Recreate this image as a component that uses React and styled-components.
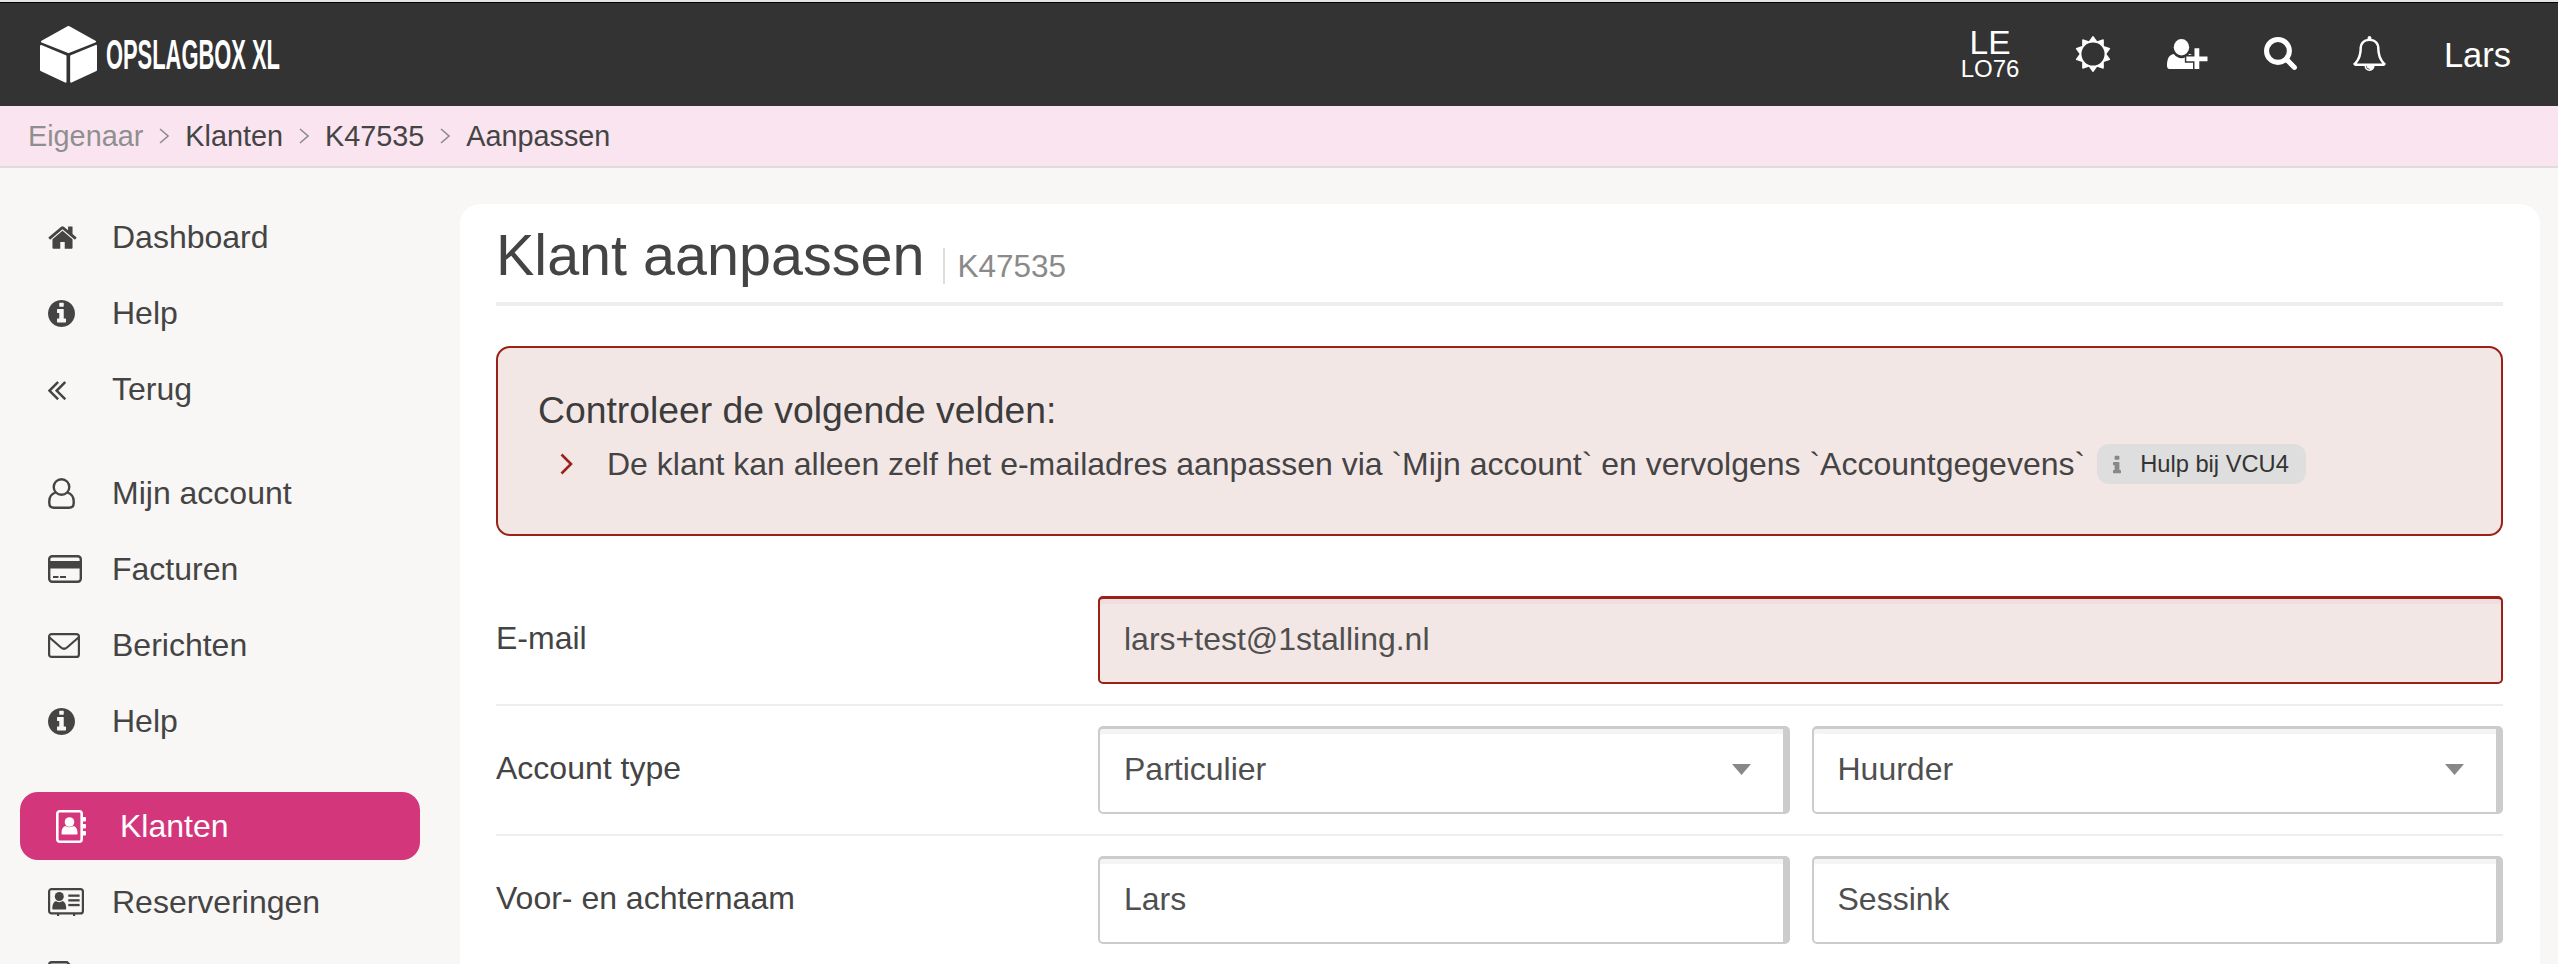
import React from 'react'
import styled, { createGlobalStyle } from 'styled-components'

const GlobalStyle = createGlobalStyle`
    html, body {
        margin: 0;
        padding: 0;
        background: #f8f7f5;
    }
    body {
        font-family: "Liberation Sans", Arial, sans-serif;
        font-size: 32px;
        color: #444;
    }
`

const Page = styled.div`
    width: 2558px;
    height: 964px;
    overflow: hidden;
    display: flex;
    flex-direction: column;
`

const TopStrip = styled.div`
    height: 2px;
    background: #e4e4e4;
    border-bottom: 1px solid #000;
`

const Header = styled.header`
    height: 103px;
    flex: none;
    background: #333;
    color: #fff;
    display: flex;
    align-items: center;
    justify-content: space-between;
    padding: 0 47px 0 40px;
`

const Logo = styled.div`
    display: flex;
    align-items: center;
    gap: 9px;
`

const LogoText = styled.div`
    width: 174px;
    font-size: 42px;
    font-weight: 700;
    line-height: 1;
    white-space: nowrap;
    transform: scaleX(0.521);
    transform-origin: left center;
`

const HeaderTools = styled.div`
    display: flex;
    align-items: center;
    gap: 56px;
    padding-bottom: 2px;
`

const Location = styled.div`
    display: flex;
    flex-direction: column;
    align-items: center;
    line-height: 1;
`

const LocationCode = styled.span`
    font-size: 33.5px;
    line-height: 30px;
`

const LocationSub = styled.span`
    font-size: 24px;
    line-height: 22px;
`

const UserName = styled.span`
    font-size: 34.5px;
    margin-top: 3px;
`

const Glyph = styled.svg`
    display: block;
    flex: none;
    width: ${p => p.$w}px;
    height: ${p => p.$h}px;
    fill: ${p => p.$fill || 'currentColor'};
`

const BellGlyph = styled(Glyph)`
    margin-right: 2px;
`

const Breadcrumb = styled.nav`
    height: 60px;
    flex: none;
    box-sizing: content-box;
    background: #fae4f0;
    border-bottom: 2px solid #ddd;
    display: flex;
    align-items: center;
    gap: 16px;
    padding-left: 28px;
    font-size: 28.8px;
`

const Crumb = styled.span`
    color: ${p => (p.$muted ? '#8f8f8f' : '#444')};
`

const CrumbArrow = styled.svg`
    width: 10px;
    height: 16px;
    fill: none;
    stroke: #8c8c8c;
    stroke-width: 1.6;
`

const Main = styled.div`
    flex: 1;
    display: flex;
    min-height: 0;
`

const Sidebar = styled.aside`
    width: 460px;
    flex: none;
    box-sizing: border-box;
    padding: 35px 0 0 20px;
`

const NavGroup = styled.ul`
    list-style: none;
    margin: 0 0 ${p => p.$after}px;
    padding: 0;
    display: flex;
    flex-direction: column;
    gap: 8px;
`

const NavRow = styled.li`
    width: 400px;
    height: 68px;
    box-sizing: border-box;
    display: flex;
    align-items: center;
    border-radius: 18px;
    padding-left: ${p => (p.$active ? 36 : 28)}px;
    background: ${p => (p.$active ? '#d4367c' : 'transparent')};
    color: ${p => (p.$active ? '#fff' : '#444')};
`

const NavIcon = styled.span`
    width: 64px;
    flex: none;
    display: flex;
    align-items: center;
`

const Card = styled.main`
    flex: 1;
    margin: 36px 18px 0 0;
    padding: 0 37px 0 36px;
    background: #fff;
    border-radius: 20px 20px 0 0;
`

const TitleBar = styled.div`
    height: 98px;
    box-sizing: content-box;
    border-bottom: 4px solid #eee;
    display: flex;
    align-items: center;
`

const Title = styled.h1`
    margin: 0;
    font-size: 57.5px;
    font-weight: 400;
    line-height: 1;
    color: #444;
    position: relative;
    top: 3px;
`

const TitleCode = styled.small`
    margin-left: 19px;
    padding-left: 12px;
    border-left: 2px solid #ddd;
    font-size: 31.5px;
    line-height: 36px;
    color: #8a8a8a;
    position: relative;
    top: 13px;
`

const Alert = styled.div`
    margin-top: 40px;
    height: 190px;
    box-sizing: border-box;
    border: 2px solid #9a2018;
    border-radius: 14px;
    background: #f3e7e6;
    padding: 40px 0 0 40px;
`

const AlertTitle = styled.div`
    font-size: 37.3px;
    line-height: 44px;
    color: #3c3c3c;
`

const AlertItem = styled.div`
    display: flex;
    align-items: center;
    margin-top: 11px;
    padding-left: 22px;
    height: 42px;
`

const AlertArrow = styled.svg`
    width: 13px;
    height: 22px;
    margin-right: 34px;
    fill: none;
    stroke: #9a2018;
    stroke-width: 2.6;
`

const HelpBadge = styled.span`
    margin-left: 12px;
    height: 40px;
    display: inline-flex;
    align-items: center;
    gap: 19px;
    padding: 0 17px 0 16px;
    border-radius: 12px;
    background: #dedede;
    color: #333;
    font-size: 23.7px;
`

const Rows = styled.div`
    margin-top: 60px;
`

const FormRow = styled.div`
    display: flex;
    align-items: center;
    padding-bottom: 20px;
    margin-bottom: 20px;
    border-bottom: 2px solid #eee;

    &:last-child {
        border-bottom: 0;
    }
`

const FieldLabel = styled.label`
    width: 602px;
    flex: none;
    padding-bottom: 3px;
`

const Fields = styled.div`
    flex: 1;
    display: flex;
    gap: 22px;
`

const Field = styled.div`
    flex: 1;
    height: 88px;
    box-sizing: border-box;
    display: flex;
    align-items: center;
    justify-content: space-between;
    padding: 0 32px 3px 24px;
    border-radius: 5px;
    border: 2px solid ${p => (p.$error ? '#9a2018' : '#ccc')};
    border-top-width: 3px;
    border-right-width: ${p => (p.$error ? 2 : 7)}px;
    background: ${p => (p.$error ? '#f3e7e6' : '#fff')};
    box-shadow: inset 0 5px 0 ${p => (p.$error ? '#ecdfde' : '#f4f4f4')};
    color: #4f4f4f;
`

const SelectArrow = styled.svg`
    width: 19px;
    height: 11px;
    fill: #888;
`

const FA = { w: 1792 }

const Cube = () => (
    <Glyph $w={57} $h={57} viewBox="0 0 172 172" stroke="#fff" strokeWidth="6" strokeLinejoin="round">
        <path d="M86 3L166 47L86 79L6 47Z" />
        <path d="M3 60L77 91V168L3 133Z" />
        <path d="M94 91L169 60V133L94 168Z" />
    </Glyph>
)

const Sun = () => (
    <Glyph $w={36} $h={36} viewBox={`0 0 ${FA.w} ${FA.w}`} fillRule="evenodd">
        <path d="M1472 896q0-117-45.500-223.500t-123-184-184-123-223.500-45.500-223.500 45.500-184 123-123 184-45.500 223.500 45.500 223.500 123 184 184 123 223.500 45.500 223.500-45.500 184-123 123-184 45.500-223.500zm276 277q-4 15-20 20l-292 96v306q0 16-13 26-15 10-29 4l-292-94-180 248q-10 13-26 13t-26-13l-180-248-292 94q-14 6-29-4-13-10-13-26v-306l-292-96q-16-5-20-20-5-17 4-29l180-248-180-248q-9-13-4-29 4-15 20-20l292-96v-306q0-16 13-26 15-10 29-4l292 94 180-248q9-12 26-12t26 12l180 248 292-94q14-6 29 4 13 10 13 26v306l292 96q16 5 20 20 5 16-4 29l-180 248 180 248q9 12 4 29z" />
    </Glyph>
)

const UserPlus = () => (
    <Glyph $w={40.500} $h={30} viewBox="0 0 42 31">
        <ellipse cx="15" cy="8.500" rx="8" ry="8.500" />
        <path d="M2.500 31Q0 31 0 27.500C0 21 2 16 7 15.500C9 18 12 20 15 20C18 20 21 18 23 15.500C27 16 28 19 28 24V31Z" />
        <path d="M28.500 9.500h5v8.500h8.500v5h-8.500v8h-5v-8h-8.500v-5h8.500z" stroke="#333" strokeWidth="3" paintOrder="stroke" />
    </Glyph>
)

const Search = () => (
    <Glyph $w={33} $h={33} viewBox="64 128 1664 1664" fillRule="evenodd">
        <path d="M1216 832q0-185-131.500-316.500t-316.500-131.500-316.500 131.500-131.500 316.500 131.500 316.500 316.500 131.500 316.500-131.500 131.500-316.500zm512 832q0 52-38 90t-90 38q-54 0-90-38l-343-342q-179 124-399 124-143 0-273.500-55.500t-225-150-150-225-55.500-273.500 55.500-273.500 150-225 225-150 273.500-55.500 273.500 55.500 225 150 150 225 55.500 273.500q0 220-124 399l343 343q37 37 37 90z" />
    </Glyph>
)

const Bell = () => (
    <BellGlyph $w={33} $h={35} viewBox="64 0 1664 1792" fillRule="evenodd">
        <path d="M912 1696q0-16-16-16-59 0-101.500-42.500t-42.500-101.500q0-16-16-16t-16 16q0 73 51.500 124.500t124.500 51.500q16 0 16-16zm-666-288h1300q-266-300-266-832 0-51-24-105t-69-103-121.500-80.500-169.500-31.500-169.500 31.500-121.500 80.500-69 103-24 105q0 532-266 832zm1482 0q0 52-38 90t-90 38h-448q0 106-75 181t-181 75-181-75-75-181h-448q-52 0-90-38t-38-90q50-42 91-88t85-119.500 74.500-158.500 50-206 19.500-260q0-152 117-282.500t307-158.500q-8-19-8-39 0-40 28-68t68-28 68 28 28 68q0 20-8 39 190 28 307 158.500t117 282.500q0 139 19.500 260t50 206 74.500 158.500 85 119.500 91 88z" />
    </BellGlyph>
)

const Home = () => (
    <Glyph $w={29} $h={24} viewBox="64 192 1664 1344">
        <path d="M1472 992v480q0 26-19 45t-45 19h-384v-384h-256v384h-384q-26 0-45-19t-19-45v-480q0-1 .5-3t.5-3l575-474 575 474q1 2 1 6zm223-69l-62 74q-8 9-21 11h-3q-13 0-21-7l-692-577-692 577q-12 8-24 7-13-2-21-11l-62-74q-8-10-7-23.500t11-21.500l719-599q32-26 76-26t76 26l244 204v-195q0-14 9-23t23-9h192q14 0 23 9t9 23v408l219 182q10 8 11 21.500t-7 23.500z" />
    </Glyph>
)

const InfoCircle = () => (
    <Glyph $w={27} $h={27} viewBox="128 128 1536 1536" fillRule="evenodd">
        <path d="M1152 1376v-160q0-14-9-23t-23-9h-96v-512q0-14-9-23t-23-9h-320q-14 0-23 9t-9 23v160q0 14 9 23t23 9h96v320h-96q-14 0-23 9t-9 23v160q0 14 9 23t23 9h448q14 0 23-9t9-23zm-128-896v-160q0-14-9-23t-23-9h-192q-14 0-23 9t-9 23v160q0 14 9 23t23 9h192q14 0 23-9t9-23zm640 416q0 209-103 385.500t-279.500 279.500-385.500 103-385.500-103-279.500-279.500-103-385.500 103-385.500 279.500-279.500 385.500-103 385.500 103 279.500 279.500 103 385.500z" />
    </Glyph>
)

const AngleDouble = () => (
    <Glyph $w={18} $h={21} viewBox="435 340 960 1120">
        <path d="M1011 1376q0 13-10 23l-50 50q-10 10-23 10t-23-10l-466-466q-10-10-10-23t10-23l466-466q10-10 23-10t23 10l50 50q10 10 10 23t-10 23l-393 393 393 393q10 10 10 23zm384 0q0 13-10 23l-50 50q-10 10-23 10t-23-10l-466-466q-10-10-10-23t10-23l466-466q10-10 23-10t23 10l50 50q10 10 10 23t-10 23l-393 393 393 393q10 10 10 23z" />
    </Glyph>
)

const UserOutline = () => (
    <Glyph $w={27} $h={31} $fill="none" viewBox="0 0 27 31" stroke="currentColor" strokeWidth="2.400">
        <circle cx="13.500" cy="9" r="7.800" />
        <path d="M7.500 14.500C3.500 16 1.300 19 1.300 23V25C1.300 28 3 29.700 6 29.700H21C24 29.700 25.700 28 25.700 25V23C25.700 19 23.500 16 19.500 14.500" />
    </Glyph>
)

const CreditCard = () => (
    <Glyph $w={34} $h={28} viewBox="0 0 34 28">
        <rect x="1.200" y="1.200" width="31.600" height="25.600" rx="3" fill="none" stroke="currentColor" strokeWidth="2.400" />
        <rect x="1" y="6" width="32" height="7.500" />
        <rect x="5" y="21" width="5.500" height="2" />
        <rect x="12" y="21" width="6" height="2" />
    </Glyph>
)

const Envelope = () => (
    <Glyph $w={32} $h={25} $fill="none" viewBox="0 0 32 25" stroke="currentColor" strokeWidth="2.200">
        <rect x="1.100" y="1.100" width="29.800" height="22.800" rx="2.500" />
        <path d="M1.500 4.500L13 14.500Q16 17 19 14.500L30.500 4.500" />
    </Glyph>
)

const AddressBook = () => (
    <Glyph $w={30} $h={33} viewBox="0 0 30 33">
        <rect x="1.300" y="1.300" width="24.400" height="30.400" rx="2.500" fill="none" stroke="currentColor" strokeWidth="2.600" />
        <rect x="26.500" y="7" width="3.500" height="4.500" rx="1" />
        <rect x="26.500" y="14" width="3.500" height="4.500" rx="1" />
        <rect x="26.500" y="21" width="3.500" height="4.500" rx="1" />
        <circle cx="13.500" cy="12" r="4.800" />
        <path d="M6 24.500Q5.500 24.500 5.500 23C5.500 19 7 16.500 9.500 16C11 17.500 16 17.500 17.500 16C20 16.500 21.500 19 21.500 23Q21.500 24.500 21 24.500Z" />
    </Glyph>
)

const AddressCard = () => (
    <Glyph $w={36} $h={28} viewBox="0 0 36 28">
        <rect x="1.100" y="1.100" width="33.800" height="24.300" rx="2.500" fill="none" stroke="currentColor" strokeWidth="2.200" />
        <circle cx="11.300" cy="8.500" r="4.500" />
        <path d="M5 21.500Q4.300 21.500 4.300 20C4.300 16 6 13.500 8 13C9.500 14.500 13 14.500 14.500 13C16.500 13.500 18.200 16 18.200 20Q18.200 21.500 17.500 21.500Z" />
        <rect x="20.300" y="6.500" width="11.300" height="2.300" />
        <rect x="20.300" y="11.200" width="11.300" height="2.300" />
        <rect x="20.300" y="15.900" width="11.300" height="2.300" />
        <rect x="9" y="25" width="2.200" height="3" />
        <rect x="25" y="25" width="2.200" height="3" />
    </Glyph>
)

const FileOutline = () => (
    <Glyph $w={30} $h={35} $fill="none" viewBox="0 0 30 35" stroke="currentColor" strokeWidth="2.400">
        <path d="M1.200 33.800V3.500Q1.200 1.200 3.500 1.200H19L28.800 11V33.800Z" />
    </Glyph>
)

const BadgeInfo = () => (
    <Glyph $w={8} $h={19} viewBox="576 128 640 1408">
        <path d="M1216 1344v128q0 26-19 45t-45 19h-512q-26 0-45-19t-19-45v-128q0-26 19-45t45-19h64v-384h-64q-26 0-45-19t-19-45v-128q0-26 19-45t45-19h384q26 0 45 19t19 45v576h64q26 0 45 19t19 45zm-128-1152v192q0 26-19 45t-45 19h-256q-26 0-45-19t-19-45v-192q0-26 19-45t45-19h256q26 0 45 19t19 45z" fill="#888" />
    </Glyph>
)

const navGroups = [
    {
        after: 36,
        items: [
            { icon: <Home />, label: 'Dashboard' },
            { icon: <InfoCircle />, label: 'Help' },
            { icon: <AngleDouble />, label: 'Terug' },
        ],
    },
    {
        after: 37,
        items: [
            { icon: <UserOutline />, label: 'Mijn account' },
            { icon: <CreditCard />, label: 'Facturen' },
            { icon: <Envelope />, label: 'Berichten' },
            { icon: <InfoCircle />, label: 'Help' },
        ],
    },
    {
        after: 0,
        items: [
            { icon: <AddressBook />, label: 'Klanten', active: true },
            { icon: <AddressCard />, label: 'Reserveringen' },
            { icon: <FileOutline />, label: '' },
        ],
    },
]

const crumbs = ['Klanten', 'K47535', 'Aanpassen']

const Arrow = () => (
    <CrumbArrow viewBox="0 0 10 16">
        <polyline points="1,1 9,8 1,15" />
    </CrumbArrow>
)

const SelectField = ({ children }) => (
    <Field>
        {children}
        <SelectArrow viewBox="0 0 19 11">
            <polygon points="0,0 19,0 9.500,11" />
        </SelectArrow>
    </Field>
)

export default function App() {
    return (
        <Page>
            <GlobalStyle />
            <TopStrip />
            <Header>
                <Logo>
                    <Cube />
                    <LogoText>OPSLAGBOX XL</LogoText>
                </Logo>
                <HeaderTools>
                    <Location>
                        <LocationCode>LE</LocationCode>
                        <LocationSub>LO76</LocationSub>
                    </Location>
                    <Sun />
                    <UserPlus />
                    <Search />
                    <Bell />
                    <UserName>Lars</UserName>
                </HeaderTools>
            </Header>
            <Breadcrumb>
                <Crumb $muted>Eigenaar</Crumb>
                {crumbs.map(c => (
                    <React.Fragment key={c}>
                        <Arrow />
                        <Crumb>{c}</Crumb>
                    </React.Fragment>
                ))}
            </Breadcrumb>
            <Main>
                <Sidebar>
                    {navGroups.map((group, i) => (
                        <NavGroup key={i} $after={group.after}>
                            {group.items.map((item, j) => (
                                <NavRow key={j} $active={item.active}>
                                    <NavIcon>{item.icon}</NavIcon>
                                    {item.label}
                                </NavRow>
                            ))}
                        </NavGroup>
                    ))}
                </Sidebar>
                <Card>
                    <TitleBar>
                        <Title>Klant aanpassen</Title>
                        <TitleCode>K47535</TitleCode>
                    </TitleBar>
                    <Alert>
                        <AlertTitle>Controleer de volgende velden:</AlertTitle>
                        <AlertItem>
                            <AlertArrow viewBox="0 0 13 22">
                                <polyline points="1.500,1.500 11,11 1.500,20.500" />
                            </AlertArrow>
                            De klant kan alleen zelf het e-mailadres aanpassen via `Mijn account` en vervolgens `Accountgegevens`
                            <HelpBadge>
                                <BadgeInfo />
                                Hulp bij VCU4
                            </HelpBadge>
                        </AlertItem>
                    </Alert>
                    <Rows>
                        <FormRow>
                            <FieldLabel>E-mail</FieldLabel>
                            <Fields>
                                <Field $error>lars+test@1stalling.nl</Field>
                            </Fields>
                        </FormRow>
                        <FormRow>
                            <FieldLabel>Account type</FieldLabel>
                            <Fields>
                                <SelectField>Particulier</SelectField>
                                <SelectField>Huurder</SelectField>
                            </Fields>
                        </FormRow>
                        <FormRow>
                            <FieldLabel>Voor- en achternaam</FieldLabel>
                            <Fields>
                                <Field>Lars</Field>
                                <Field>Sessink</Field>
                            </Fields>
                        </FormRow>
                    </Rows>
                </Card>
            </Main>
        </Page>
    )
}
